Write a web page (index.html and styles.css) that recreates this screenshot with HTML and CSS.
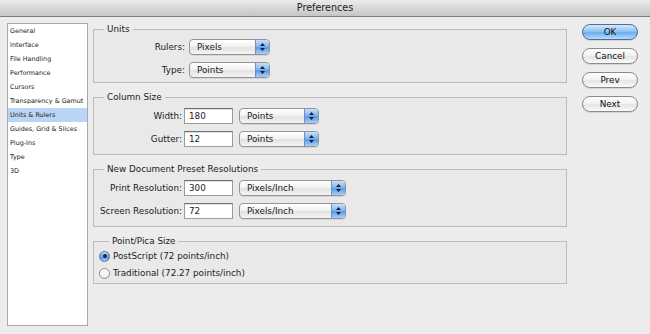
FILE: index.html
```html
<!DOCTYPE html>
<html lang="en">
<head>
    <meta charset="UTF-8">
    <title>Preferences</title>
    <link rel="stylesheet" href="styles.css">
</head>
<body>
    <div class="titlebar">Preferences</div>
    <div class="window">
        <ul class="sidebar">
            <li>General</li>
            <li>Interface</li>
            <li>File Handling</li>
            <li>Performance</li>
            <li>Cursors</li>
            <li>Transparency &amp; Gamut</li>
            <li class="selected">Units &amp; Rulers</li>
            <li>Guides, Grid &amp; Slices</li>
            <li>Plug-Ins</li>
            <li>Type</li>
            <li>3D</li>
        </ul>

        <div class="panes">
            <fieldset class="group units">
                <legend>Units</legend>
                <div class="row">
                    <span class="lbl">Rulers:</span>
                    <span class="popup w81"><span class="val">Pixels</span><span class="arrows"><svg width="7" height="10" viewBox="0 0 7 10"><path d="M3.5 1L6 4H1z M1 6H6L3.5 9z"/></svg></span></span>
                </div>
                <div class="row">
                    <span class="lbl">Type:</span>
                    <span class="popup w81"><span class="val">Points</span><span class="arrows"><svg width="7" height="10" viewBox="0 0 7 10"><path d="M3.5 1L6 4H1z M1 6H6L3.5 9z"/></svg></span></span>
                </div>
            </fieldset>

            <fieldset class="group">
                <legend>Column Size</legend>
                <div class="row">
                    <span class="lbl">Width:</span>
                    <span class="field">180</span>
                    <span class="popup w80"><span class="val">Points</span><span class="arrows"><svg width="7" height="10" viewBox="0 0 7 10"><path d="M3.5 1L6 4H1z M1 6H6L3.5 9z"/></svg></span></span>
                </div>
                <div class="row">
                    <span class="lbl">Gutter:</span>
                    <span class="field">12</span>
                    <span class="popup w80"><span class="val">Points</span><span class="arrows"><svg width="7" height="10" viewBox="0 0 7 10"><path d="M3.5 1L6 4H1z M1 6H6L3.5 9z"/></svg></span></span>
                </div>
            </fieldset>

            <fieldset class="group">
                <legend>New Document Preset Resolutions</legend>
                <div class="row">
                    <span class="lbl">Print Resolution:</span>
                    <span class="field">300</span>
                    <span class="popup w107"><span class="val">Pixels/Inch</span><span class="arrows"><svg width="7" height="10" viewBox="0 0 7 10"><path d="M3.5 1L6 4H1z M1 6H6L3.5 9z"/></svg></span></span>
                </div>
                <div class="row">
                    <span class="lbl">Screen Resolution:</span>
                    <span class="field">72</span>
                    <span class="popup w107"><span class="val">Pixels/Inch</span><span class="arrows"><svg width="7" height="10" viewBox="0 0 7 10"><path d="M3.5 1L6 4H1z M1 6H6L3.5 9z"/></svg></span></span>
                </div>
            </fieldset>

            <fieldset class="group pica">
                <legend>Point/Pica Size</legend>
                <div class="radio"><span class="dot on"></span>PostScript (72 points/inch)</div>
                <div class="radio"><span class="dot"></span>Traditional (72.27 points/inch)</div>
            </fieldset>
        </div>

        <div class="buttons">
            <span class="btn default">OK</span>
            <span class="btn">Cancel</span>
            <span class="btn">Prev</span>
            <span class="btn">Next</span>
        </div>
    </div>
</body>
</html>
```

FILE: styles.css
```css
*{
    box-sizing: border-box;
}
body{
    margin: 0;
    width: 650px;
    height: 334px;
    background: #ececec;
    font-family: "DejaVu Sans", sans-serif;
    font-size: 8.8px;
    color: #1c1c1c;
    overflow: hidden;
}
.titlebar{
    height: 17px;
    line-height: 16px;
    text-align: center;
    font-size: 9.6px;
    color: #222;
    background: linear-gradient(#ebebeb, #d8d8d8 50%, #c6c6c6);
    border-bottom: 1px solid #7d7d7d;
}
.window{
    display: flex;
    align-items: flex-start;
    padding: 6px 0 0 7px;
}

/* список разделов слева */
.sidebar{
    list-style: none;
    margin: 0;
    padding: 0;
    width: 81px;
    height: 303px;
    background: #fff;
    border: 1px solid #a9a9a9;
    font-size: 6.4px;
    color: #222;
}
.sidebar li{
    height: 14px;
    line-height: 14px;
    padding-left: 2px;
    white-space: nowrap;
}
.sidebar .selected{
    background: #b9d5f5;
}

/* группы настроек */
.panes{
    width: 474px;
    margin-left: 5px;
}
.group{
    margin: 0;
    padding: 4px 0 4px;
    border: 1px solid #bcbcbc;
    background: rgba(0,0,0,0.012);
    min-width: 0;
}
.group + .group{
    margin-top: 8px;
}
.group legend{
    margin-left: 10px;
    padding: 0 3px;
    line-height: 12px;
    height: 12px;
}
.group:nth-child(2), .group:nth-child(3){
    padding: 5px 0 7px;
}
.pica{
    padding: 2px 0 3px 5px !important;
}
.row{
    display: flex;
    align-items: center;
    height: 16px;
}
.row + .row{
    margin-top: 7px;
}
.lbl{
    width: 88px;
    text-align: right;
    white-space: nowrap;
}
.units .lbl{
    width: 91px;
}
.units .popup{
    margin-left: 4px;
}
.field{
    width: 49px;
    height: 16px;
    margin-left: 2px;
    padding-left: 4px;
    line-height: 14px;
    background: #fff;
    border: 1px solid #9a9a9a;
    border-top-color: #6e6e6e;
    box-shadow: inset 0 1px 0 #e2e2e2;
}
.field + .popup{
    margin-left: 6px;
}

/* выпадающий список в стиле aqua */
.popup{
    display: flex;
    align-items: center;
    height: 16px;
    border: 1px solid #949494;
    border-radius: 4px;
    background: linear-gradient(#ffffff, #f2f2f2 45%, #e2e2e2 55%, #f5f5f5);
    box-shadow: 0 1px 0 rgba(0,0,0,0.08);
    overflow: hidden;
}
.w81{ width: 81px; }
.w80{ width: 80px; }
.w107{ width: 107px; }
.popup .val{
    flex: 1;
    padding-left: 7px;
    line-height: 14px;
}
.arrows{
    width: 14px;
    height: 14px;
    display: flex;
    align-items: center;
    justify-content: center;
    border-left: 1px solid #6f8fc0;
    border-radius: 0 3px 3px 0;
    background: linear-gradient(#c8e0fa, #83b6ef 45%, #5b9ae6 55%, #a8d0fa);
}
.arrows svg{
    fill: #14213d;
}

/* радиокнопки */
.radio{
    display: flex;
    align-items: center;
    height: 14px;
}
.radio + .radio{
    margin-top: 3px;
}
.dot{
    width: 11px;
    height: 11px;
    margin-right: 3px;
    border-radius: 50%;
    border: 1px solid #8c8c8c;
    background: linear-gradient(#ffffff, #ececec);
    display: flex;
    align-items: center;
    justify-content: center;
}
.dot.on{
    border-color: #5a74a0;
    background: linear-gradient(#c2dcf8, #6ea6e8 50%, #4c8fe0 55%, #a5cdf8);
}
.dot.on::after{
    content: "";
    width: 4px;
    height: 4px;
    border-radius: 50%;
    background: #1a2540;
}

/* кнопки справа */
.buttons{
    display: flex;
    flex-direction: column;
    gap: 8px;
    margin: 1px 0 0 15px;
}
.btn{
    width: 56px;
    height: 16px;
    line-height: 14px;
    text-align: center;
    font-size: 8.8px;
    color: #111;
    border: 1px solid #8a8a8a;
    border-radius: 8px;
    background: linear-gradient(#ffffff, #f3f3f3 45%, #e4e4e4 55%, #fafafa);
    box-shadow: 0 1px 0 rgba(0,0,0,0.1);
}
.btn.default{
    border-color: #4d6c9c;
    background: linear-gradient(#d3e8fc, #93c4f3 45%, #6daeef 55%, #b5dcfc);
}
```
